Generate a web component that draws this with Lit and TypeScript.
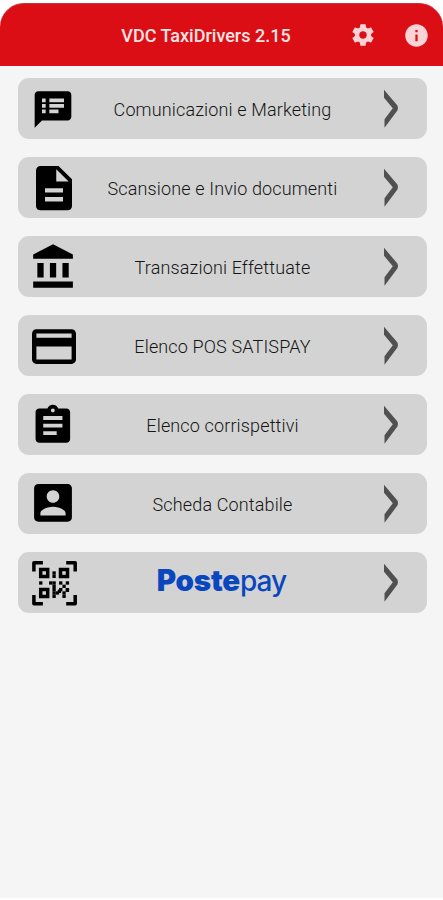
import { LitElement, html, css, svg } from "lit";
import { customElement } from "lit/decorators.js";

const qrModules = [
  [4, 1], [4, 2], [0, 4], [3, 4], [4, 4], [4, 5], [6, 4], [8, 4], [7, 5],
  [4, 6], [6, 6], [8, 6], [4, 7], [5, 7], [5.6, 6.5], [8, 6.2], [7, 7], [4, 8], [7, 8],
];

const icons = {
  notes: svg`<g transform="translate(4 5.5) scale(1.833)"><path d="M20 2H4c-1.100 0-1.990.9-1.990 2L2 22l4-4h14c1.100 0 2-.9 2-2V4c0-1.100-.9-2-2-2zM8 14H6v-2h2v2zm0-3H6V9h2v2zm0-3H6V6h2v2zm7 6h-5v-2h5v2zm3-3h-8V9h8v2zm0-3h-8V6h8v2z"/></g>`,
  document: svg`<g transform="translate(0 .5) scale(2.25 2.22)"><path d="M14 2H6c-1.100 0-1.990.9-1.990 2L4 20c0 1.100.89 2 1.990 2H18c1.100 0 2-.9 2-2V8l-6-6zm2 16H8v-2h8v2zm0-4H8v-2h8v2zm-3-5V3.500L18.500 9H13z"/></g>`,
  bank: svg`<g transform="translate(2 2.200) scale(2.09 2.07)"><path d="M4 10v7h3v-7H4zm6 0v7h3v-7h-3zM2 22h19v-3H2v3zm14-12v7h3v-7h-3zm-4.500-9L2 6v2h19V6l-9.500-5z"/></g>`,
  card: svg`<g transform="translate(.6 1.500) scale(2.2 2.170)"><path d="M20 4H4c-1.110 0-1.990.89-1.990 2L2 18c0 1.110.89 2 2 2h16c1.110 0 2-.89 2-2V6c0-1.110-.89-2-2-2zm0 14H4v-6h16v6zm0-10H4V6h16v2z"/></g>`,
  clipboard: svg`<g transform="translate(2.800 4.800) scale(1.92 1.9)"><path d="M19 3h-4.180C14.400 1.840 13.300 1 12 1c-1.300 0-2.400.84-2.820 2H5c-1.100 0-2 .9-2 2v14c0 1.100.9 2 2 2h14c1.100 0 2-.9 2-2V5c0-1.100-.9-2-2-2zm-7 0c.55 0 1 .45 1 1s-.45 1-1 1-1-.45-1-1 .45-1 1-1zm2 14H7v-2h7v2zm3-4H7v-2h10v2zm0-4H7V7h10v2z"/></g>`,
  person: svg`<g transform="translate(.8 .6) scale(2.1)"><path d="M3 5v14c0 1.100.89 2 2 2h14c1.100 0 2-.9 2-2V5c0-1.100-.9-2-2-2H5c-1.110 0-2 .9-2 2zm12 4c0 1.660-1.340 3-3 3s-3-1.340-3-3 1.340-3 3-3 3 1.340 3 3zm-9 8c0-2 4-3.100 6-3.100s6 1.100 6 3.100v1H6v-1z"/></g>`,
  qr: svg`<g transform="translate(5.200 5)">
    <path fill="none" stroke="#000" stroke-width="3.500" stroke-linejoin="round" d="M1.700 10.500V1.700H10.700M34 1.700H43V10.500M43 34V42.700H34M10.700 42.700H1.700V34"/>
    <path fill="none" stroke="#000" stroke-width="3.500" d="M8.500 8.600h7v7h-7zM28.300 8.600h7v7h-7zM8.500 28.400h7v7h-7z"/>
    ${qrModules.map(([c, r]) => svg`<rect x=${6.9 + c * 3.33} y=${7 + r * 3.33} width="3.330" height="3.330"/>`)}
  </g>`,
};

type Entry = { icon: keyof typeof icons; label: string; brand?: boolean };

const entries: Entry[] = [
  { icon: "notes", label: "Comunicazioni e Marketing" },
  { icon: "document", label: "Scansione e Invio documenti" },
  { icon: "bank", label: "Transazioni Effettuate" },
  { icon: "card", label: "Elenco POS SATISPAY" },
  { icon: "clipboard", label: "Elenco corrispettivi" },
  { icon: "person", label: "Scheda Contabile" },
  { icon: "qr", label: "Postepay", brand: true },
];

@customElement("app-root")
export class AppRoot extends LitElement {
  static styles = css`
    :host {
      display: block;
      height: 900px;
      overflow: hidden;
      background: #fff;
      font-family: Roboto, sans-serif;
    }
    .screen {
      box-sizing: border-box;
      height: 898px;
      padding-top: 3px;
      background: linear-gradient(#fff 0 40px, #f5f5f5 40px);
    }
    header {
      box-sizing: border-box;
      height: 63px;
      display: grid;
      grid-template-columns: 85px 1fr 85px;
      align-items: center;
      background: #db0d15;
      border-top: 1px solid #c9353a;
      border-radius: 24px 24px 0 0;
      color: #fde4e4;
    }
    h1 {
      grid-column: 2;
      margin: 0;
      padding: 2px 31px 0 0;
      text-align: center;
      white-space: nowrap;
      font-size: 18px;
      line-height: 24px;
      font-weight: 500;
    }
    .actions {
      display: flex;
      align-items: center;
      justify-content: flex-end;
      margin-left: -30px;
      padding-right: 13.500px;
      gap: 27px;
      fill: #fbd3d5;
    }
    .actions svg { display: block; width: 27px; height: 27px; }
    .actions .gear { width: 26px; height: 26px; }
    nav {
      display: flex;
      flex-direction: column;
      gap: 18px;
      padding: 12.300px 16px 0 18px;
    }
    .entry {
      box-sizing: border-box;
      height: 61px;
      display: grid;
      grid-template-columns: 63px 1fr 63px;
      align-items: center;
      border-radius: 11px;
      background: #d3d3d3;
    }
    .icon { display: block; width: 54px; height: 54px; margin-left: 9px; }
    .label {
      text-align: center;
      white-space: nowrap;
      font-size: 18px;
      line-height: 24px;
      font-weight: 300;
      letter-spacing: 0.14px;
      color: #151515;
      padding-top: 2px;
    }
    .brand {
      font-family: Inter, sans-serif;
      font-size: 28px;
      line-height: 30px;
      color: #0a47bf;
      font-weight: 500;
      padding: 0 2px 4px 0;
      letter-spacing: -0.9px;
    }
    .brand b { font-size: 29.500px; font-weight: 900; letter-spacing: -0.2px; }
    .chevron { display: block; width: 20px; height: 40px; margin-left: 17px; }
  `;

  render() {
    return html`
      <div class="screen">
        <header>
          <h1>VDC TaxiDrivers 2.15</h1>
          <div class="actions">
            <svg class="gear" viewBox="0 0 24 24"><path d="M19.430 12.980c.04-.32.07-.64.07-.98s-.03-.66-.07-.98l2.110-1.650c.19-.15.24-.42.12-.64l-2-3.460c-.12-.22-.39-.3-.61-.22l-2.490 1c-.52-.4-1.080-.73-1.690-.98l-.38-2.650C14.460 2.180 14.250 2 14 2h-4c-.25 0-.46.18-.49.42l-.38 2.650c-.61.25-1.170.59-1.690.98l-2.490-1c-.23-.09-.49 0-.61.22l-2 3.460c-.13.22-.07.49.12.64l2.110 1.650c-.04.32-.07.65-.07.98s.03.66.07.98l-2.110 1.650c-.19.15-.24.42-.12.64l2 3.460c.12.22.39.3.61.22l2.490-1c.52.4 1.080.73 1.690.98l.38 2.650c.03.24.24.42.49.42h4c.25 0 .46-.18.49-.42l.38-2.650c.61-.25 1.170-.59 1.690-.98l2.490 1c.23.09.49 0 .61-.22l2-3.460c.12-.22.07-.49-.12-.64l-2.110-1.650zM12 15.500c-1.930 0-3.500-1.570-3.500-3.500s1.570-3.500 3.500-3.500 3.500 1.570 3.500 3.500-1.570 3.500-3.500 3.500z"/></svg>
            <svg viewBox="0 0 24 24"><path d="M12 2C6.480 2 2 6.480 2 12s4.480 10 10 10 10-4.480 10-10S17.520 2 12 2zm1 15h-2v-6h2v6zm0-8h-2V7h2v2z"/></svg>
          </div>
        </header>
        <nav>
          ${entries.map(
            (e) => html`
              <div class="entry">
                <svg class="icon" viewBox="0 0 54 54">${icons[e.icon]}</svg>
                ${e.brand
                  ? html`<span class="label brand"><b>Poste</b>pay</span>`
                  : html`<span class="label">${e.label}</span>`}
                <svg class="chevron" viewBox="0 0 20 40"><path fill="#505050" d="M3 .8L16.400 16.500Q17.600 19 16.400 21.500L3.500 38.800V30.300L11.800 19.200L3 8.800z"/></svg>
              </div>
            `,
          )}
        </nav>
      </div>
    `;
  }
}
